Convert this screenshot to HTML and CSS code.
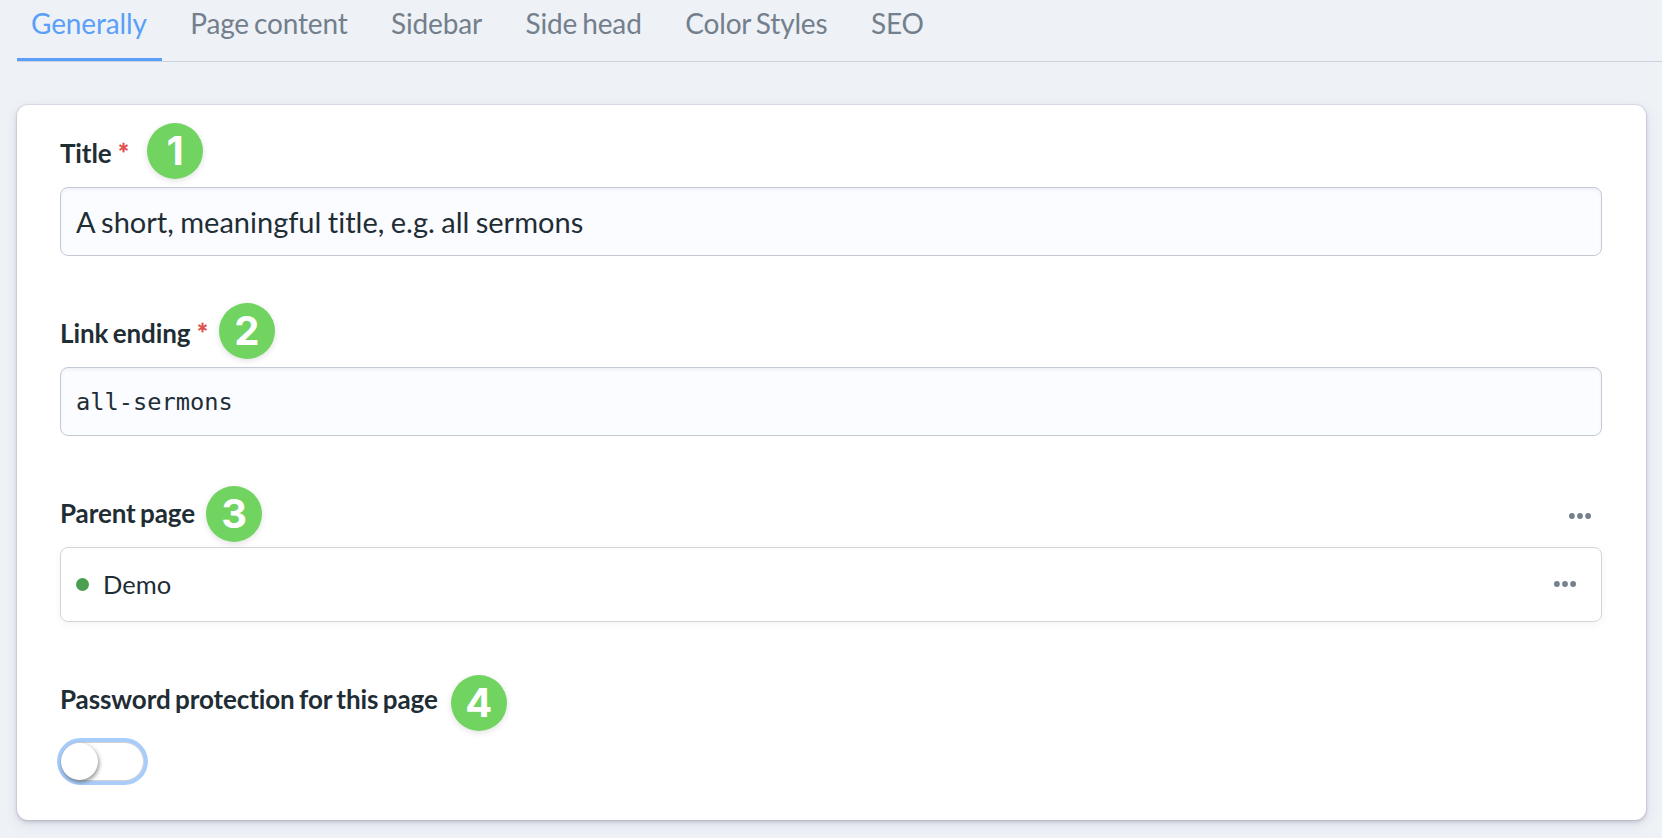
FILE: index.html
```html
<!DOCTYPE html>
<html lang="en">
<head>
  <meta charset="UTF-8" />
  <meta name="viewport" content="width=device-width, initial-scale=1" />
  <title>Edit page</title>
  <link rel="stylesheet" href="styles.css">
</head>
<body>
  <nav class="tabs">
    <a class="tab active">Generally</a>
    <a class="tab">Page content</a>
    <a class="tab">Sidebar</a>
    <a class="tab">Side head</a>
    <a class="tab">Color Styles</a>
    <a class="tab">SEO</a>
  </nav>

  <main class="card">
    <!-- Title -->
    <section class="field">
      <div class="label-row">
        <label class="label" for="title">Title <span class="required">*</span><span class="badge badge-1">1</span></label>
      </div>
      <input class="input" id="title" type="text" value="A short, meaningful title, e.g. all sermons" />
    </section>

    <!-- Link ending -->
    <section class="field">
      <div class="label-row">
        <label class="label" for="slug">Link ending <span class="required">*</span><span class="badge badge-2">2</span></label>
      </div>
      <input class="input mono" id="slug" type="text" value="all-sermons" />
    </section>

    <!-- Parent page -->
    <section class="field">
      <div class="label-row">
        <span class="label">Parent page<span class="badge badge-3">3</span></span>
        <svg class="dots" viewBox="0 0 22 6"><circle cx="2.9" cy="3" r="2.9"/><circle cx="11" cy="3" r="2.9"/><circle cx="19.1" cy="3" r="2.9"/></svg>
      </div>
      <div class="relation">
        <span class="status"></span>
        <span class="relation-name">Demo</span>
        <svg class="dots" viewBox="0 0 22 6"><circle cx="2.9" cy="3" r="2.9"/><circle cx="11" cy="3" r="2.9"/><circle cx="19.1" cy="3" r="2.9"/></svg>
      </div>
    </section>

    <!-- Password protection -->
    <section class="field">
      <div class="label-row">
        <span class="label">Password protection for this page<span class="badge badge-4">4</span></span>
      </div>
      <button class="toggle" type="button"><span class="knob"></span></button>
    </section>
  </main>
</body>
</html>
```
FILE: styles.css
```css
* {
  box-sizing: border-box;
}

body {
  margin: 0;
  height: 838px;
  overflow: hidden;
  background: #eef1f6;
  color: #1f2d35;
  font-family: Lato, sans-serif;
  font-variant-ligatures: none;
}

.tabs {
  display: flex;
  gap: 14px;
  height: 62px;
  margin-left: 17px;
  border-bottom: 1px solid #cdd2dc;
}

.tab {
  height: 61px;
  padding: 7px 15.5px 0 14px;
  font-size: 28px;
  line-height: 33px;
  letter-spacing: -0.15px;
  word-spacing: -2px;
  color: #737f8c;
  white-space: nowrap;
}

.tab.active {
  color: #5a9ff8;
  border-bottom: 3px solid #5a9ff8;
}

.card {
  height: 715px;
  margin: 43px 16px 0 17px;
  padding: 26px 44px 0 43px;
  background: #fff;
  border-radius: 11px;
  box-shadow: 0 0 0 1px rgba(49, 49, 93, 0.08), 0 2px 4px rgba(49, 49, 93, 0.2), 0 4px 14px rgba(49, 49, 93, 0.09);
}

.field {
  margin-bottom: 55px;
}

.label-row {
  display: flex;
  justify-content: space-between;
  height: 46px;
  margin-bottom: 10px;
  padding: 4px 11px 0 0;
}

.label-row .dots {
  margin-top: 18px;
}

.label {
  position: relative;
  height: 36px;
  font-size: 26px;
  font-weight: 700;
  line-height: 36px;
  letter-spacing: -0.11px;
  word-spacing: -1.7px;
  white-space: nowrap;
}

.required {
  margin-left: 2px;
  color: #e0504c;
  -webkit-text-stroke: 0.4px #e0504c;
}

.badge {
  position: absolute;
  left: 100%;
  width: 56px;
  height: 56px;
  border-radius: 50%;
  background: #71d360;
  box-shadow: 0 2px 6px rgba(0, 0, 0, 0.12);
  color: #fff;
  font-family: Inter, sans-serif;
  font-size: 40px;
  font-weight: 700;
  line-height: 55px;
  text-align: center;
}

.badge-1 {
  top: -12px;
  margin-left: 18px;
}

.badge-2 {
  top: -12px;
  margin-left: 11px;
}

.badge-3 {
  top: -9px;
  margin-left: 11px;
}

.badge-4 {
  top: -6px;
  margin-left: 13px;
}

.input {
  display: block;
  width: 100%;
  height: 69px;
  padding: 0 15px 1px;
  border: 1px solid #c4cad3;
  border-radius: 8px;
  background: #fbfcff;
  box-shadow: inset 0 2px 3px rgba(49, 49, 93, 0.06);
  color: #1f2d35;
  font-family: Lato, sans-serif;
  font-size: 29px;
  font-variant-ligatures: none;
  word-spacing: -1px;
}

.input.mono {
  padding-bottom: 0;
  font-family: "DejaVu Sans Mono", monospace;
  font-size: 23.7px;
}

.relation {
  display: flex;
  align-items: center;
  height: 75px;
  padding: 0 25px 1px 15px;
  border: 1px solid #d2d4da;
  border-radius: 8px;
  box-shadow: 0 2px 8px rgba(0, 0, 0, 0.05);
  font-size: 25.5px;
}

.status {
  width: 13px;
  height: 13px;
  margin-right: 14px;
  border-radius: 50%;
  background: #4c9f50;
}

.relation-name {
  flex: 1;
}

.dots {
  width: 22px;
  height: 6px;
  fill: #74818d;
}

.toggle {
  display: block;
  width: 83px;
  height: 39px;
  margin: 19px 0 0 1px;
  padding: 0;
  border: 1px solid #d2d2d6;
  border-radius: 20px;
  background: #fff;
  box-shadow: 0 0 0 4px #a9cdfb;
}

.knob {
  display: block;
  width: 37px;
  height: 37px;
  margin-left: -1px;
  border-radius: 50%;
  background: #fff;
  box-shadow: 1px 2px 4px rgba(0, 0, 0, 0.45);
}
```
